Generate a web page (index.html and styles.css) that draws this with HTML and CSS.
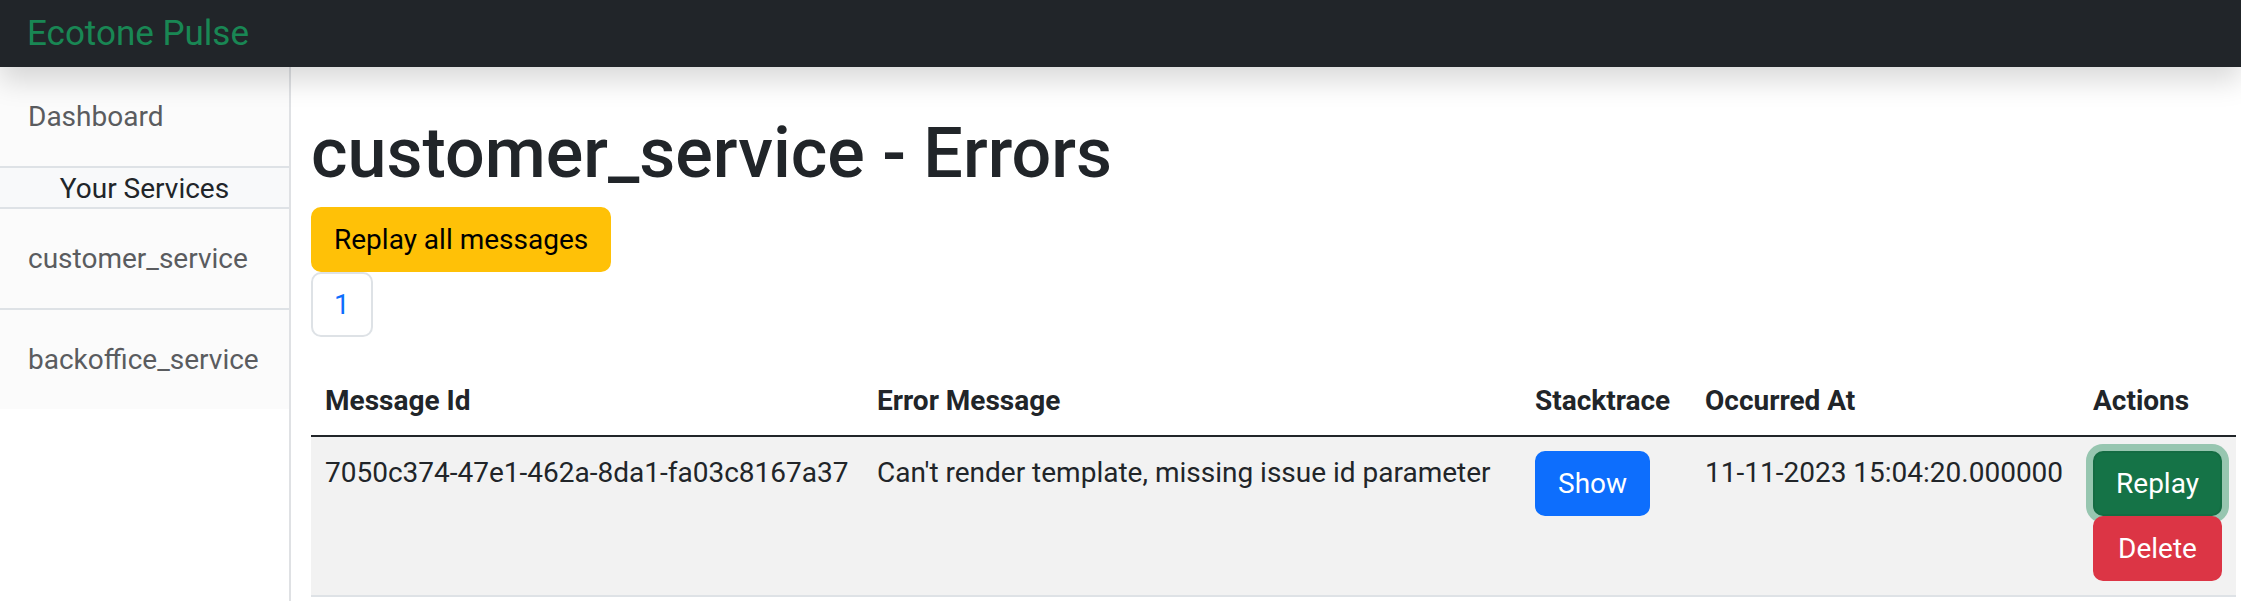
FILE: index.html
```html
<!DOCTYPE html>
<html lang="en">
<head>
<meta charset="utf-8">
<title>Ecotone Pulse</title>
<link rel="stylesheet" href="styles.css">
</head>
<body>
<nav class="navbar">
  <a class="brand" href="#">Ecotone Pulse</a>
</nav>
<div class="layout">
  <aside class="sidebar">
    <ul class="side-nav">
      <li><a class="side-link" href="#">Dashboard</a></li>
      <li class="side-heading">Your Services</li>
      <li class="side-item-divided"><a class="side-link" href="#">customer_service</a></li>
      <li><a class="side-link" href="#">backoffice_service</a></li>
    </ul>
  </aside>
  <main class="main">
    <h1 class="title">customer_service - Errors</h1>
    <button class="btn btn-warning" type="button">Replay all messages</button>
    <ul class="pagination">
      <li><a class="page-link" href="#">1</a></li>
    </ul>
    <table class="table">
      <thead>
        <tr>
          <th class="col-id">Message Id</th>
          <th class="col-err">Error Message</th>
          <th class="col-stack">Stacktrace</th>
          <th class="col-date">Occurred At</th>
          <th class="col-actions">Actions</th>
        </tr>
      </thead>
      <tbody>
        <tr>
          <td class="cell-text">7050c374-47e1-462a-8da1-fa03c8167a37</td>
          <td class="cell-text">Can't render template, missing issue id parameter</td>
          <td><button class="btn btn-primary" type="button">Show</button></td>
          <td class="cell-text">11-11-2023 15:04:20.000000</td>
          <td>
            <div class="actions">
              <button class="btn btn-success is-focused" type="button">Replay</button>
              <button class="btn btn-danger" type="button">Delete</button>
            </div>
          </td>
        </tr>
      </tbody>
    </table>
  </main>
</div>
</body>
</html>
```
FILE: styles.css
```css
* { box-sizing: border-box; }

html, body {
  margin: 0;
  padding: 0;
}

body {
  font-family: Roboto, "Liberation Sans", sans-serif;
  font-size: 28px;
  line-height: 42px;
  color: #212529;
  background: #ffffff;
  min-height: 601px;
}

/* Top navbar */
.navbar {
  position: relative;
  z-index: 2;
  height: 67px;
  background: #212529;
  display: flex;
  align-items: center;
  padding: 0 0 0 27px;
  box-shadow: 0 14px 28px rgba(0, 0, 0, 0.15);
}

.brand {
  color: #198754;
  font-size: 35px;
  line-height: 52px;
  text-decoration: none;
}

/* Layout */
.layout {
  display: flex;
  min-height: 534px;
}

.sidebar {
  width: 291px;
  flex: 0 0 291px;
  border-right: 2px solid #dfe1e4;
  background: #ffffff;
}

.side-nav {
  list-style: none;
  margin: 0;
  padding: 0;
  background: #fbfbfb;
}

.side-link {
  display: block;
  padding: 29px 28px 28px;
  color: #5a5c5f;
  text-decoration: none;
  white-space: nowrap;
}

.side-heading {
  background: #f8f9fa;
  border-top: 2px solid #dee2e6;
  border-bottom: 2px solid #dee2e6;
  text-align: center;
  line-height: 39px;
  padding-top: 1px;
  height: 43px;
  color: #212529;
}

.side-item-divided {
  border-bottom: 2px solid #dee2e6;
}

/* Main */
.main {
  flex: 1 1 auto;
  min-width: 0;
  padding: 44px 5px 0 20px;
}

.title {
  margin: 0 0 12px;
  font-size: 70px;
  line-height: 84px;
  font-weight: 500;
  color: #212529;
}

.btn {
  display: inline-block;
  font-family: inherit;
  font-size: 28px;
  line-height: 42px;
  font-weight: 400;
  padding: 10px 21px 9px;
  border: 2px solid transparent;
  border-radius: 10px;
  cursor: pointer;
  text-align: center;
  white-space: nowrap;
  vertical-align: top;
}

.btn-warning {
  background: #ffc107;
  border-color: #ffc107;
  color: #000000;
}

.btn-primary {
  background: #0d6efd;
  border-color: #0d6efd;
  color: #ffffff;
}

.btn-success {
  background: #198754;
  border-color: #198754;
  color: #ffffff;
}

.btn-success.is-focused {
  background: #157347;
  border-color: #146c43;
  box-shadow: 0 0 0 7px rgba(60, 153, 110, 0.5);
}

.btn-danger {
  background: #dc3545;
  border-color: #dc3545;
  color: #ffffff;
}

.pagination {
  list-style: none;
  display: flex;
  margin: 0 0 28px;
  padding: 0;
}

.page-link {
  display: block;
  padding: 10px 21px 9px;
  border: 2px solid #dee2e6;
  border-radius: 10px;
  color: #0d6efd;
  text-decoration: none;
  background: #ffffff;
}

/* Table */
.table {
  width: 100%;
  table-layout: fixed;
  border-collapse: collapse;
  color: #212529;
}

.table th,
.table td {
  padding: 14px;
  text-align: left;
  white-space: nowrap;
}

.table th {
  font-weight: 700;
  vertical-align: bottom;
  border-bottom: 2px solid #212529;
  padding-top: 15px;
  padding-bottom: 13px;
}

.table td {
  vertical-align: top;
  background: #f2f2f2;
  border-bottom: 2px solid #dee2e6;
}

.table td.cell-text {
  padding-top: 15px;
}

.col-id { width: 552px; }
.col-err { width: 658px; }
.col-stack { width: 170px; }
.col-date { width: 388px; }
.col-actions { width: 157px; }

.actions {
  display: flex;
  flex-direction: column;
  align-items: stretch;
  width: 129px;
}
```
